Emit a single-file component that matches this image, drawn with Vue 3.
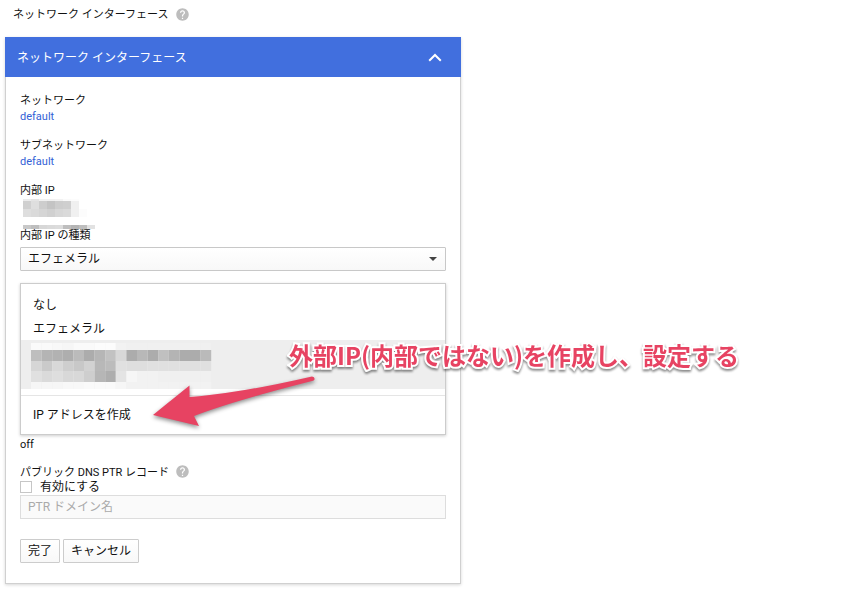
<template>
  <div class="page">
    <h1 class="page-title">
      ネットワーク インターフェース
      <svg class="help" viewBox="0 0 24 24" role="img" aria-label="ヘルプ"><path :d="helpPath" /></svg>
    </h1>

    <section class="card">
      <button type="button" class="card-header">
        <span>ネットワーク インターフェース</span>
        <svg class="chevron" viewBox="0 0 14 9" aria-hidden="true"><path d="M1.200 7.800 7 2l5.800 5.800" /></svg>
      </button>

      <form class="card-body" @submit.prevent>
        <div v-for="item in networks" :key="item.label" class="field">
          <p class="label">{{ item.label }}</p>
          <a href="#" class="link">{{ item.value }}</a>
        </div>

        <p class="label">内部 IP</p>
        <svg class="ip-mask" viewBox="0 0 80 29" aria-hidden="true">
          <rect v-for="(c, i) in ipCells" :key="i" :x="c.x" :y="c.y" :width="c.w" :height="c.h" :fill="c.fill" />
        </svg>

        <label class="label type-label" for="ip-type">内部 IP の種類</label>
        <div class="select-box">
          <select id="ip-type" v-model="ipType">
            <option>エフェメラル</option>
            <option>静的</option>
          </select>
        </div>

        <ul class="menu">
          <li><button type="button">なし</button></li>
          <li><button type="button">エフェメラル</button></li>
          <li class="active">
            <svg class="address-mask" viewBox="0 0 424 49" aria-hidden="true">
              <rect v-for="(c, i) in addressCells" :key="i" :x="c.x" :y="c.y" :width="c.w" :height="c.h" :fill="c.fill" />
            </svg>
          </li>
          <li class="create"><button type="button">IP アドレスを作成</button></li>
        </ul>

        <p class="label forwarding">off</p>

        <p class="label ptr-title">
          パブリック DNS PTR レコード
          <svg class="help" viewBox="0 0 24 24" role="img" aria-label="ヘルプ"><path :d="helpPath" /></svg>
        </p>
        <label class="check">
          <input v-model="ptrEnabled" type="checkbox" />
          <span>有効にする</span>
        </label>
        <input class="domain" type="text" placeholder="PTR ドメイン名" aria-label="PTR ドメイン名" :disabled="!ptrEnabled" />

        <div class="actions">
          <button type="submit">完了</button>
          <button type="button">キャンセル</button>
        </div>
      </form>
    </section>

    <svg class="arrow" viewBox="0 0 180 60" aria-hidden="true">
      <path d="M2 50 38.500 20.500V32Q85 29 161 11.500Q164 12 163.500 14.500Q163 15.500 161 16Q82 36 43 51L48 61Z" />
    </svg>
    <p class="note">外部IP(内部ではない)を作成し、設定する</p>
  </div>
</template>

<script setup>
import { ref } from 'vue'

const helpPath =
  'M12 2C6.480 2 2 6.480 2 12s4.480 10 10 10 10-4.480 10-10S17.520 2 12 2zm1 17h-2v-2h2v2zm2.070-7.750l-.9.920C13.450 12.900 13 13.500 13 15h-2v-.5c0-1.100.450-2.100 1.170-2.830l1.240-1.260c.370-.360.590-.860.590-1.410 0-1.100-.9-2-2-2s-2 .9-2 2H8c0-2.210 1.790-4 4-4s4 1.790 4 4c0 .880-.360 1.680-.930 2.250z'

const networks = [
  { label: 'ネットワーク', value: 'default' },
  { label: 'サブネットワーク', value: 'default' }
]

const ipType = ref('エフェメラル')
const ptrEnabled = ref(false)

// each row: top, height, then one grey per cell
const buildCells = (rows, left, size) =>
  rows.flatMap(([y, h, ...greys]) =>
    greys.map((g, i) => ({ x: left + i * size, y, w: size, h, fill: `rgb(${g}, ${g}, ${g})` }))
  )

const ipCells = buildCells(
  [
    [0, 2, 236, 228, 240, 240, 242, 250, 252],
    [2, 8, 208, 222, 205, 196, 205, 207, 240],
    [10, 8, 222, 218, 213, 208, 215, 218, 240, 252],
    [26, 4, 200, 190, 215, 218, 220, 190, 180, 190, 226]
  ],
  3,
  8
)

const addressCells = buildCells(
  [
    [3, 7, 250, 250, 248, 246, 250, 250, 252, 252, 242, 240, 240, 240, 240, 240, 240, 240, 240],
    [10, 11, 190, 180, 178, 174, 187, 172, 182, 194, 216, 172, 184, 172, 192, 180, 172, 172, 186],
    [21, 10, 214, 202, 216, 206, 200, 210, 184, 188, 224, 222, 222, 224, 224, 224, 224, 224, 224],
    [31, 11, 224, 218, 222, 216, 216, 206, 182, 174, 228, 246, 242, 242, 240, 240, 240, 240, 240],
    [42, 7, 246, 246, 246, 248, 248, 250, 250, 250, 246, 242, 242, 242, 242, 242, 242, 242, 242]
  ],
  10,
  10.6
)
</script>

<style>
body {
  margin: 0;
  background: #fff;
}
</style>

<style scoped>
.page {
  position: relative;
  padding: 6px 5px 10px;
  font-family: Roboto, 'Noto Sans CJK JP', sans-serif;
  font-size: 12px;
  color: #111;
}

button,
input,
select {
  font: inherit;
  color: inherit;
}

.page-title {
  display: flex;
  align-items: center;
  gap: 6px;
  margin: 0 0 13px;
  padding-left: 8px;
  font-size: 11px;
  font-weight: 400;
  line-height: 18px;
}

.help {
  width: 15px;
  height: 15px;
  margin-bottom: 2px;
  fill: #bdbdbd;
}

.card {
  max-width: 456px;
  box-sizing: border-box;
  border: 1px solid #d0d0d0;
  border-top: 0;
  box-shadow: 0 1px 3px rgba(0, 0, 0, 0.16);
}

.card-header {
  display: flex;
  align-items: center;
  justify-content: space-between;
  width: calc(100% + 2px);
  height: 40px;
  margin: 0 -1px;
  padding: 0 19px 0 12px;
  border: 0;
  background: #416fde;
  color: #fff;
  cursor: pointer;
}

.card-header span,
.check span {
  padding-bottom: 2px;
}

.chevron {
  width: 14px;
  height: 9px;
  fill: none;
  stroke: #fff;
  stroke-width: 2;
}

.card-body {
  padding: 16px 14px 20px;
}

.field {
  margin-bottom: 13px;
}

.label,
.link {
  display: block;
  margin: 0;
  font-size: 11px;
  line-height: 16px;
}

.link {
  color: #3261d6;
  text-decoration: none;
}

.ip-mask {
  display: block;
  width: 80px;
  height: 29px;
  overflow: visible;
}

.type-label {
  position: relative;
}

.select-box {
  position: relative;
  margin: 3px 0 12px;
}

.select-box::after {
  content: '';
  position: absolute;
  top: 10px;
  right: 9px;
  border: 4px solid transparent;
  border-top-color: #444;
  border-bottom: 0;
  pointer-events: none;
}

select {
  display: block;
  appearance: none;
  width: 100%;
  height: 24px;
  padding: 0 7px;
  border: 1px solid #c8c8c8;
  border-radius: 1px;
  background: linear-gradient(#fff, #f8f8f8);
}

.menu {
  margin: 0;
  padding: 8px 0 0;
  list-style: none;
  border: 1px solid #ccc;
  background: #fff;
  box-shadow: 0 1px 3px rgba(0, 0, 0, 0.2);
}

.menu button {
  display: block;
  width: 100%;
  height: 24px;
  padding: 0 12px 2px;
  border: 0;
  background: none;
  text-align: left;
}

.active {
  background: #eee;
}

.address-mask {
  display: block;
  width: 424px;
  max-width: 100%;
}

.create {
  margin-top: 6px;
  padding: 6px 0 8px;
  border-top: 1px solid #e5e5e5;
}

.forwarding {
  margin: 2px 0 12px;
}

.ptr-title {
  display: flex;
  align-items: center;
  gap: 6px;
  height: 15px;
}

.check {
  display: flex;
  align-items: center;
  gap: 8px;
  height: 13px;
}

.check input {
  appearance: none;
  width: 12px;
  height: 12px;
  margin: 0;
  border: 1px solid #c6c6c6;
  background: #fff;
}

.domain {
  display: block;
  box-sizing: border-box;
  width: 100%;
  height: 24px;
  margin: 2px 0 20px;
  padding: 0 7px;
  border: 1px solid #ddd;
  background: #fafafa;
}

.domain::placeholder {
  color: #aaa;
}

.actions {
  display: flex;
  gap: 3px;
}

.actions button {
  height: 24px;
  padding: 0 7px 3px;
  border: 1px solid #ccc;
  border-radius: 1px;
  background: linear-gradient(#fff, #f8f8f8);
}

.arrow {
  position: absolute;
  top: 365px;
  left: 151px;
  width: 180px;
  height: 60px;
  overflow: visible;
  fill: #e74362;
  filter: drop-shadow(0 2px 2px rgba(0, 0, 0, 0.45));
}

.note {
  position: absolute;
  top: 337px;
  left: 289px;
  margin: 0;
  font-family: 'Noto Sans CJK JP', sans-serif;
  font-size: 24px;
  font-weight: 700;
  line-height: 36px;
  white-space: nowrap;
  color: #e74362;
  -webkit-text-stroke: 4px #fff;
  paint-order: stroke fill;
  filter: drop-shadow(0 2px 1px rgba(0, 0, 0, 0.45));
}
</style>
